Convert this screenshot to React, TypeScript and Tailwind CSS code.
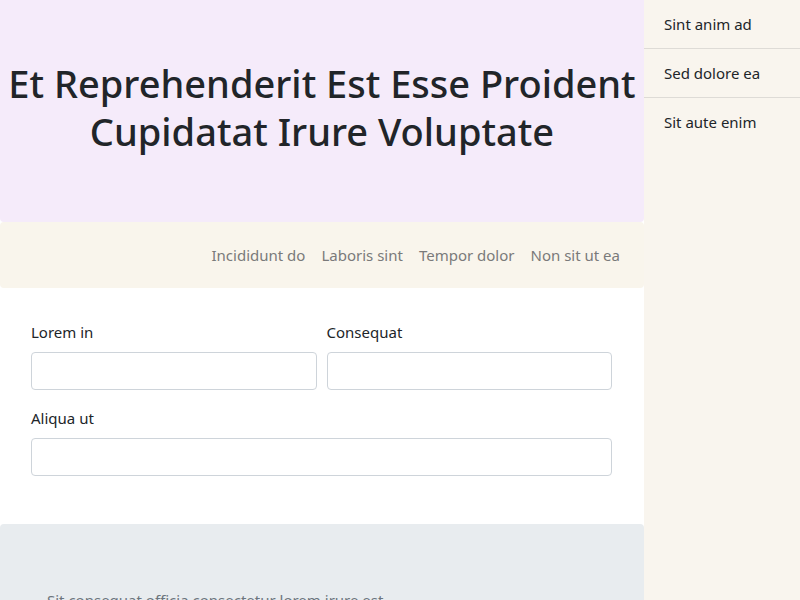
export default function App() {
  const navLinks = ["Incididunt do", "Laboris sint", "Tempor dolor", "Non sit ut ea"];
  const sideItems = ["Sint anim ad", "Sed dolore ea", "Sit aute enim"];

  return (
    <div className="flex h-[600px] w-[800px] overflow-hidden bg-white font-['Noto_Sans',sans-serif] text-[#212529]">
      <main className="flex w-[644px] shrink-0 flex-col">
        <header className="flex h-[222px] shrink-0 items-center justify-center rounded-b-[4px] bg-[#f5ebfa] px-2 pb-2">
          <h1 className="text-center text-[38px] font-medium leading-[48px] text-[#212529]">
            Et Reprehenderit Est Esse Proident Cupidatat Irure Voluptate
          </h1>
        </header>

        <nav className="flex h-[66px] shrink-0 items-center justify-end gap-4 rounded-[4px] bg-[#f9f5ec] pr-6">
          {navLinks.map((link) => (
            <a key={link} href="#" className="text-[15px] text-[#7a7a7a]">
              {link}
            </a>
          ))}
        </nav>

        <form className="flex h-[236px] shrink-0 flex-col gap-[17px] pl-[31px] pr-[32px] pt-[33px]">
          <div className="grid grid-cols-2 gap-[10px]">
            <label className="flex flex-col gap-[9px] text-[15px] leading-[22px]">
              Lorem in
              <input className="h-[38px] rounded-[4px] border border-[#ced4da] bg-white" />
            </label>
            <label className="flex flex-col gap-[9px] text-[15px] leading-[22px]">
              Consequat
              <input className="h-[38px] rounded-[4px] border border-[#ced4da] bg-white" />
            </label>
          </div>
          <label className="flex flex-col gap-[9px] text-[15px] leading-[22px]">
            Aliqua ut
            <input className="h-[38px] rounded-[4px] border border-[#ced4da] bg-white" />
          </label>
        </form>

        <footer className="flex-1 rounded-t-[4px] bg-[#e8ecef] pl-[47px] pt-[64px]">
          <p className="text-[15px] leading-[24px] text-[#6c757d]">
            Sit consequat officia consectetur lorem irure est
          </p>
        </footer>
      </main>

      <aside className="flex-1 bg-[#f9f5ee]">
        {sideItems.map((item, i) => (
          <div
            key={item}
            className={
              i < sideItems.length - 1
                ? "flex h-[49px] items-center border-b border-[#dedbd6] pl-5 text-[15px] text-[#212529]"
                : "flex h-[49px] items-center pl-5 text-[15px] text-[#212529]"
            }
          >
            {item}
          </div>
        ))}
      </aside>
    </div>
  );
}
